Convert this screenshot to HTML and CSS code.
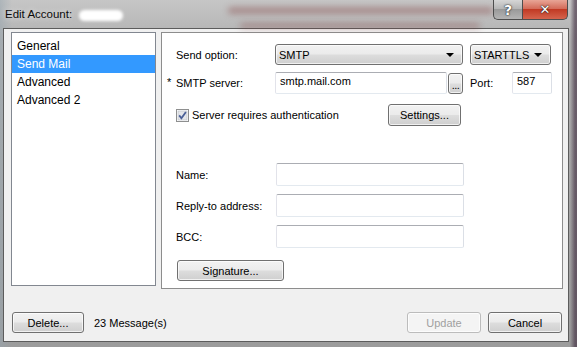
FILE: index.html
```html
<!DOCTYPE html>
<html lang="en">
<head>
    <meta charset="UTF-8">
    <title>Edit Account</title>
    <link rel="stylesheet" href="styles.css">
</head>
<body>
    <div class="window">
        <div class="titlebar">
            <span class="title">Edit Account:</span>
            <span class="redacted"></span>
            <span class="glass-blur blur-one"></span>
            <span class="glass-blur blur-two"></span>
            <div class="caption-btns">
                <div class="cap help">?</div>
                <div class="cap close">&#x2715;</div>
            </div>
        </div>

        <div class="client">
            <div class="main">
                <ul class="nav">
                    <li>General</li>
                    <li class="selected">Send Mail</li>
                    <li>Advanced</li>
                    <li>Advanced 2</li>
                </ul>

                <div class="panel">
                    <div class="row">
                        <label class="lbl">Send option:</label>
                        <div class="combo combo-main">
                            <span>SMTP</span>
                            <svg class="arrow" width="8" height="4" viewBox="0 0 8 4"><polygon points="0,0 8,0 4,4" fill="#000"/></svg>
                        </div>
                        <div class="combo combo-tls">
                            <span>STARTTLS</span>
                            <svg class="arrow" width="8" height="4" viewBox="0 0 8 4"><polygon points="0,0 8,0 4,4" fill="#000"/></svg>
                        </div>
                    </div>

                    <div class="row row-server">
                        <label class="lbl"><span class="req">*</span>SMTP server:</label>
                        <div class="field field-server">smtp.mail.com</div>
                        <div class="btn btn-dots">...</div>
                        <label class="lbl-port">Port:</label>
                        <div class="field field-port">587</div>
                    </div>

                    <div class="row row-auth">
                        <svg class="check" width="13" height="13" viewBox="0 0 13 13">
                            <rect x="0.5" y="0.5" width="12" height="12" fill="#fff" stroke="#8e8f8f"/>
                            <rect x="2" y="2" width="9" height="9" fill="#e4e6ea" stroke="#b7bcc4" stroke-width="0.6"/>
                            <path d="M3.2 6.4 L5.4 9.2 L9.9 2.9" fill="none" stroke="#4a5f97" stroke-width="1.8"/>
                        </svg>
                        <span class="auth-text">Server requires authentication</span>
                        <div class="btn btn-settings">Settings...</div>
                    </div>

                    <div class="row row-name">
                        <label class="lbl">Name:</label>
                        <div class="field field-wide"></div>
                    </div>
                    <div class="row row-next">
                        <label class="lbl">Reply-to address:</label>
                        <div class="field field-wide"></div>
                    </div>
                    <div class="row row-next">
                        <label class="lbl">BCC:</label>
                        <div class="field field-wide"></div>
                    </div>

                    <div class="btn btn-signature">Signature...</div>
                </div>
            </div>

            <div class="footer">
                <div class="btn btn-foot">Delete...</div>
                <span class="count">23 Message(s)</span>
                <div class="spacer"></div>
                <div class="btn btn-foot disabled">Update</div>
                <div class="btn btn-foot">Cancel</div>
            </div>
        </div>
    </div>
</body>
</html>
```

FILE: styles.css
```css
* {
    margin: 0;
    padding: 0;
    box-sizing: border-box;
}

body {
    width: 577px;
    height: 347px;
    overflow: hidden;
    font-family: 'Liberation Sans', Arial, sans-serif;
    font-size: 11px;
    color: #000;
}

.window {
    width: 577px;
    height: 347px;
    display: flex;
    flex-direction: column;
    background:
        linear-gradient(90deg, rgba(150, 165, 175, 0.5) 0px, rgba(170, 170, 170, 0) 12px, rgba(170, 170, 170, 0) 570px, rgba(60, 40, 60, 0.6) 575px),
        linear-gradient(180deg, #c6c6c6 0%, #b0b0b0 12%, #a4a4a4 60%, #9c9c9c 100%);
}

/* title bar */
.titlebar {
    position: relative;
    height: 28px;
    display: flex;
    align-items: flex-start;
    padding-left: 5px;
}

.title {
    margin-top: 8px;
    font-size: 11.5px;
    color: #0c0c0c;
    text-shadow: 0 0 6px rgba(255, 255, 255, 0.8);
}

.redacted {
    width: 44px;
    height: 11px;
    margin-top: 10px;
    margin-left: 7px;
    background: #fff;
    border-radius: 6px;
    filter: blur(1.5px);
}

.glass-blur {
    position: absolute;
    background: rgba(120, 40, 40, 0.35);
    filter: blur(3px);
    border-radius: 4px;
}

.blur-one {
    left: 228px;
    top: 7px;
    width: 265px;
    height: 7px;
}

.blur-two {
    left: 240px;
    top: 23px;
    width: 240px;
    height: 5px;
}

.caption-btns {
    margin-left: auto;
    margin-right: 9px;
    display: flex;
    position: relative;
}

.cap {
    height: 20px;
    display: flex;
    align-items: center;
    justify-content: center;
    color: #fff;
    font-family: 'DejaVu Sans', sans-serif;
    font-weight: bold;
    border: 1px solid #4d4d4d;
    border-top: none;
    text-shadow: 0 0 2px #222, 0 0 1px #000;
}

.help {
    width: 29px;
    font-size: 14px;
    border-radius: 0 0 0 5px;
    border-right: none;
    background: linear-gradient(180deg, #d6d6d6 0%, #b6b6b6 45%, #9a9a9a 50%, #b4b4b4 100%);
}

.close {
    width: 46px;
    font-size: 13px;
    border-radius: 0 0 5px 0;
    background: linear-gradient(180deg, #e8a596 0%, #d46c5a 45%, #c13a24 50%, #d5644d 100%);
}

/* client area */
.client {
    width: 566px;
    height: 314px;
    margin-left: 3px;
    background: #f0f0f0;
    border: 1px solid #5c5c5c;
    display: flex;
    flex-direction: column;
}

.main {
    display: flex;
    align-items: flex-start;
    padding: 3px 0 0 7px;
}

.nav {
    list-style: none;
    width: 145px;
    height: 254px;
    background: #fff;
    border: 1px solid #828790;
    padding-top: 4px;
    font-size: 12px;
}

.nav li {
    height: 18px;
    line-height: 18px;
    padding-left: 5px;
}

.nav li.selected {
    background: #3399ff;
    color: #fff;
}

.panel {
    width: 402px;
    height: 257px;
    margin-left: 5px;
    background: #fff;
    border: 1px solid #8d8d8d;
    padding: 11px 0 0 14px;
}

.row {
    display: flex;
    align-items: center;
}

.lbl {
    width: 99px;
    position: relative;
}

.req {
    position: absolute;
    left: -9px;
    top: -1px;
}

/* buttons and combos */
.btn,
.combo {
    border: 1px solid #707070;
    border-radius: 3px;
    background: linear-gradient(180deg, #f2f2f2 0%, #ebebeb 48%, #dddddd 52%, #cfcfcf 100%);
    box-shadow: inset 0 0 0 1px rgba(255, 255, 255, 0.7);
}

.btn {
    display: flex;
    align-items: center;
    justify-content: center;
}

.combo {
    height: 21px;
    display: flex;
    align-items: center;
    justify-content: space-between;
    padding: 0 8px 0 3px;
}

.combo-main {
    width: 188px;
}

.combo-tls {
    width: 81px;
    margin-left: 7px;
}

.field {
    height: 22px;
    background: #fff;
    border: 1px solid #abadb3;
    border-color: #abadb3 #dbdfe6 #e3e9ef #e2e3ea;
    border-radius: 2px;
    padding: 2px 0 0 4px;
}

.row-server {
    margin-top: 7px;
}

.field-server {
    width: 172px;
}

.btn-dots {
    width: 15px;
    height: 21px;
    margin-left: 1px;
    align-items: flex-end;
    padding-bottom: 2px;
    font-size: 11px;
    line-height: 11px;
    letter-spacing: -0.5px;
}

.lbl-port {
    width: 42px;
    margin-left: 7px;
}

.field-port {
    width: 40px;
}

.row-auth {
    margin-top: 10px;
    height: 22px;
}

.check {
    display: block;
    margin-top: 1px;
}

.auth-text {
    margin-left: 3px;
    width: 196px;
}

.btn-settings {
    width: 73px;
    height: 22px;
}

.row-name {
    margin-top: 37px;
}

.row-next {
    margin-top: 8px;
}

.row-name .lbl,
.row-next .lbl {
    width: 100px;
}

.field-wide {
    width: 188px;
    height: 23px;
}

.btn-signature {
    width: 107px;
    height: 21px;
    margin: 12px 0 0 1px;
}

/* footer */
.footer {
    display: flex;
    align-items: center;
    margin-top: 23px;
    padding: 0 6px 0 8px;
}

.btn-foot {
    width: 72px;
    height: 21px;
}

.btn-foot + .btn-foot {
    margin-left: 7px;
}

.btn-foot.disabled {
    width: 74px;
    color: #a0a0a0;
    border-color: #bcbcbc;
    background: #f4f4f4;
}

.footer .btn-foot:last-child {
    width: 74px;
}

.count {
    margin-left: 10px;
}

.spacer {
    flex: 1;
}
```
